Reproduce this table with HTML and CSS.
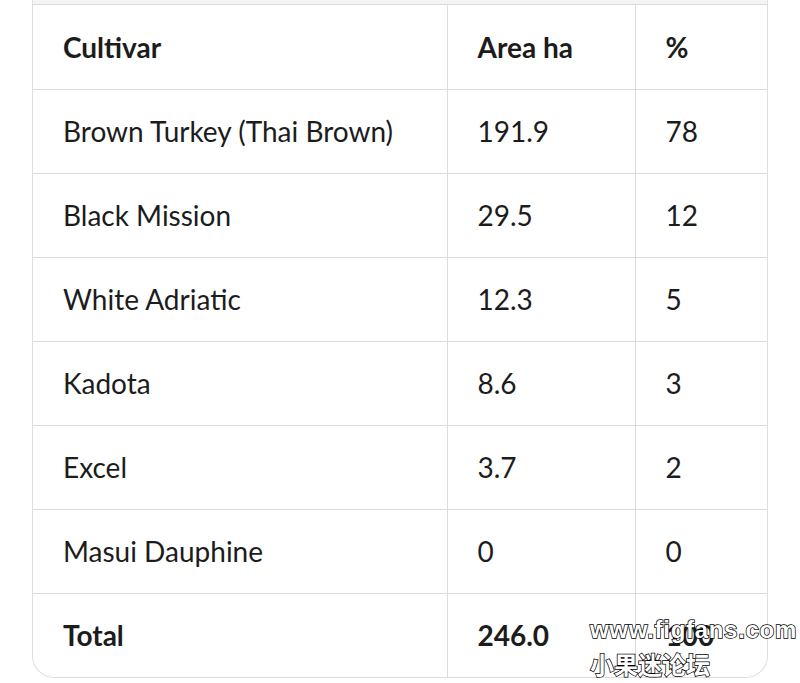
FILE: index.html
```html
<!DOCTYPE html>
<html>
<head>
<meta charset="utf-8">
<link rel="stylesheet" href="styles.css">
</head>
<body>
<div class="page">
  <div class="card">
    <div class="prev-row"></div>
    <table class="tbl">
      <colgroup>
        <col class="c1"><col class="c2"><col class="c3">
      </colgroup>
      <thead>
        <tr><th>Cultivar</th><th>Area ha</th><th>%</th></tr>
      </thead>
      <tbody>
        <tr><td>Brown Turkey (Thai Brown)</td><td>191.9</td><td>78</td></tr>
        <tr><td>Black Mission</td><td>29.5</td><td>12</td></tr>
        <tr><td>White Adriatic</td><td>12.3</td><td>5</td></tr>
        <tr><td>Kadota</td><td>8.6</td><td>3</td></tr>
        <tr><td>Excel</td><td>3.7</td><td>2</td></tr>
        <tr><td>Masui Dauphine</td><td>0</td><td>0</td></tr>
        <tr class="total"><td>Total</td><td>246.0</td><td>100</td></tr>
      </tbody>
    </table>
  </div>
  <div class="watermark">
    <div class="wm-url">www.figfans.com</div>
    <div class="wm-cn">小果迷论坛</div>
  </div>
</div>
</body>
</html>
```
FILE: styles.css
```css
html, body {
  margin: 0;
  padding: 0;
  background: #ffffff;
}
.page {
  position: relative;
  width: 800px;
  height: 683px;
  overflow: hidden;
  font-family: "Lato", "Noto Sans", sans-serif;
  color: #1c1c1c;
}
.card {
  margin-left: 32px;
  width: 734px;
  border: 1px solid #dedede;
  border-top: none;
  border-radius: 0 0 22px 22px;
  overflow: hidden;
}
.prev-row {
  height: 4px;
  background: #f4f4f4;
  border-bottom: 1px solid #dcdcdc;
}
.tbl {
  width: 100%;
  border-collapse: collapse;
  table-layout: fixed;
}
.c1 { width: 414px; }
.c2 { width: 188px; }
.c3 { width: auto; }
.tbl th, .tbl td {
  height: 84px;
  padding: 0 0 0 30px;
  text-align: left;
  vertical-align: middle;
  font-size: 28px;
  font-weight: 400;
  border-bottom: 1px solid #dcdcdc;
  border-left: 1px solid #dcdcdc;
  box-sizing: border-box;
}
.tbl th:first-child, .tbl td:first-child {
  border-left: none;
}
.tbl tr:last-child td {
  border-bottom: none;
}
.tbl th, .total td {
  font-weight: 700;
}
.watermark {
  position: absolute;
  left: 590px;
  top: 614px;
  color: #ffffff;
  font-weight: 700;
  -webkit-text-stroke: 1.5px #000;
  paint-order: stroke fill;
}
.wm-url {
  font-family: "Liberation Sans", sans-serif;
  font-size: 24px;
  letter-spacing: 0.7px;
  line-height: 32px;
}
.wm-cn {
  font-family: "Noto Sans CJK SC", sans-serif;
  font-size: 24px;
  line-height: 36px;
}
```
